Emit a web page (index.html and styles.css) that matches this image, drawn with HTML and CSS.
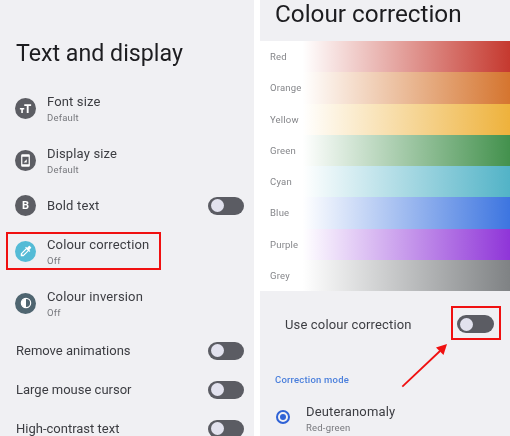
FILE: index.html
```html
<!DOCTYPE html>
<html lang="en">
<head>
    <meta charset="UTF-8">
    <title>Colour correction</title>
    <link rel="stylesheet" href="styles.css">
</head>
<body>
    <!-- Text and display screen -->
    <div class="panel left-panel">
        <h1 class="left-title">Text and display</h1>

        <div class="row row-icon">
            <div class="icon icon-dark">
                <svg viewBox="0 0 24 24" width="15" height="15"><path d="M10 5h11v3h-4v11h-3V8h-4zM3 11h7v2.400H7.800V19H5.200v-5.600H3z" fill="#fff"/></svg>
            </div>
            <div class="row-text">
                <div class="row-title">Font size</div>
                <div class="row-sub">Default</div>
            </div>
        </div>

        <div class="row row-icon">
            <div class="icon icon-dark">
                <svg viewBox="0 0 24 24" width="15" height="15"><path d="M7 2h10a2 2 0 0 1 2 2v16a2 2 0 0 1-2 2H7a2 2 0 0 1-2-2V4a2 2 0 0 1 2-2zm0 4v12h10V6zM9 15l5-5v5z" fill="#fff" fill-rule="evenodd"/></svg>
            </div>
            <div class="row-text">
                <div class="row-title">Display size</div>
                <div class="row-sub">Default</div>
            </div>
        </div>

        <div class="row row-single">
            <div class="icon icon-dark icon-letter">B</div>
            <div class="row-text">
                <div class="row-title">Bold text</div>
            </div>
            <div class="toggle"><div class="knob"></div></div>
        </div>

        <div class="row row-icon row-marked">
            <div class="icon icon-cyan">
                <svg viewBox="0 0 24 24" width="14" height="14"><path d="M20.710 5.630l-2.340-2.340c-.39-.39-1.020-.39-1.410 0l-3.120 3.120-1.930-1.910-1.410 1.410 1.420 1.420L3 16.250V21h4.750l8.920-8.920 1.420 1.420 1.410-1.410-1.920-1.920 3.120-3.120c.4-.4.4-1.030.01-1.420zM6.920 19L5 17.080l8.060-8.060 1.920 1.920L6.920 19z" fill="#fff"/></svg>
            </div>
            <div class="row-text">
                <div class="row-title">Colour correction</div>
                <div class="row-sub">Off</div>
            </div>
            <div class="red-box red-box-row"></div>
        </div>

        <div class="row row-icon">
            <div class="icon icon-slate">
                <svg viewBox="0 0 24 24" width="14" height="14"><circle cx="12" cy="12" r="8" fill="none" stroke="#fff" stroke-width="2"/><path d="M12 4a8 8 0 0 0 0 16z" fill="#fff"/></svg>
            </div>
            <div class="row-text">
                <div class="row-title">Colour inversion</div>
                <div class="row-sub">Off</div>
            </div>
        </div>

        <div class="row row-plain first-plain">
            <div class="row-title">Remove animations</div>
            <div class="toggle"><div class="knob"></div></div>
        </div>
        <div class="row row-plain">
            <div class="row-title">Large mouse cursor</div>
            <div class="toggle"><div class="knob"></div></div>
        </div>
        <div class="row row-plain">
            <div class="row-title">High-contrast text</div>
            <div class="toggle"><div class="knob"></div></div>
        </div>
    </div>

    <!-- Colour correction screen -->
    <div class="panel right-panel">
        <div class="right-header">
            <h1 class="right-title">Colour correction</h1>
        </div>

        <div class="swatches">
            <div class="swatch red">Red</div>
            <div class="swatch orange">Orange</div>
            <div class="swatch yellow">Yellow</div>
            <div class="swatch green">Green</div>
            <div class="swatch cyan">Cyan</div>
            <div class="swatch blue">Blue</div>
            <div class="swatch purple">Purple</div>
            <div class="swatch grey">Grey</div>
        </div>

        <div class="use-row">
            <div class="use-label">Use colour correction</div>
            <div class="toggle toggle-big">
                <div class="knob"></div>
                <div class="red-box red-box-toggle"></div>
            </div>
        </div>

        <div class="mode-label">Correction mode</div>

        <div class="radio-row">
            <div class="radio"><div class="radio-dot"></div></div>
            <div class="row-text">
                <div class="row-title">Deuteranomaly</div>
                <div class="row-sub">Red-green</div>
            </div>
        </div>

        <!-- Red arrow pointing at the toggle -->
        <svg class="arrow" width="60" height="60" viewBox="0 0 60 60">
            <path d="M1.300 45.700L39 10" stroke="#f01010" stroke-width="1.800" fill="none"/>
            <path d="M46 3L35 6.500L42.500 14z" fill="#f01010"/>
        </svg>
    </div>
</body>
</html>
```

FILE: styles.css
```css
html, body {
    margin: 0;
    padding: 0;
}

body {
    width: 510px;
    height: 436px;
    overflow: hidden;
    display: flex;
    gap: 6px;
    background: white;
    font-family: Roboto, "Noto Sans", sans-serif;
    color: #3c3d42;
}

/* The source picture is a soft, upscaled screenshot */
.panel {
    height: 436px;
    overflow: hidden;
    filter: blur(0.35px);
}

/* Left screen */
.left-panel {
    width: 254px;
    flex: none;
    background: #f0f0f3;
}

.left-title {
    margin: 0;
    height: 82px;
    padding: 39px 0 0 16px;
    box-sizing: border-box;
    font-size: 23.2px;
    line-height: 28px;
    font-weight: 400;
    color: #1d1d20;
}

.row {
    display: flex;
    align-items: center;
    position: relative;
}

.row-icon {
    height: 52px;
    padding-left: 15px;
}

.row-single {
    height: 39px;
    padding: 0 10px 0 15px;
}

.row-plain {
    height: 39px;
    padding: 0 10px 0 16px;
    justify-content: space-between;
}

.row-plain .row-title {
    letter-spacing: 0;
}

.first-plain {
    margin-top: 2px;
}

.icon {
    width: 21px;
    height: 21px;
    border-radius: 50%;
    display: flex;
    align-items: center;
    justify-content: center;
    flex: none;
    margin-right: 11px;
}

.icon-dark {
    background: #5c5d63;
}

.icon-cyan {
    background: #54bbd6;
}

.icon-slate {
    background: #4f6570;
}

.icon-letter {
    color: white;
    font-size: 11px;
    font-weight: 700;
}

.row-text {
    flex: 1;
}

.row-icon .row-text, .radio-row .row-text {
    padding-top: 2px;
}

.row-title {
    font-size: 13px;
    line-height: 16px;
    letter-spacing: 0.15px;
    color: #3c3d42;
}

.row-sub {
    font-size: 9.5px;
    line-height: 12px;
    margin-top: 2px;
    letter-spacing: 0.2px;
    color: #77787d;
}

/* Switches */
.toggle {
    width: 36px;
    height: 18px;
    border-radius: 9px;
    background: #5b5c63;
    position: relative;
    flex: none;
    display: flex;
    align-items: center;
    padding-left: 3px;
    box-sizing: border-box;
}

.toggle-big {
    width: 37px;
}

.knob {
    width: 13px;
    height: 13px;
    border-radius: 50%;
    background: #e2e2ee;
}

/* Red annotations */
.red-box {
    position: absolute;
    border: 2px solid #f01010;
    box-sizing: border-box;
}

.red-box-row {
    left: 6px;
    top: 7px;
    width: 155px;
    height: 38px;
}

.red-box-toggle {
    left: -6px;
    top: -9px;
    width: 50px;
    height: 34px;
}

.arrow {
    position: absolute;
    left: 141px;
    top: 341px;
}

/* Right screen */
.right-panel {
    width: 250px;
    flex: none;
    background: #f0f0f3;
    position: relative;
}

.right-header {
    height: 41px;
    padding-left: 15px;
    overflow: hidden;
}

.right-title {
    margin: 0;
    font-size: 24.3px;
    line-height: 28px;
    font-weight: 400;
    color: #1d1d20;
}

.swatch {
    height: 31.25px;
    line-height: 31.25px;
    padding-left: 10px;
    font-size: 9.5px;
    letter-spacing: 0.2px;
    color: #85868a;
}

.red { background: linear-gradient(90deg, #fff 17%, #c5392f); }
.orange { background: linear-gradient(90deg, #fff 17%, #d5752f); }
.yellow { background: linear-gradient(90deg, #fff 17%, #eeb23c); }
.green { background: linear-gradient(90deg, #fff 17%, #43914d); }
.cyan { background: linear-gradient(90deg, #fff 17%, #52b3c7); }
.blue { background: linear-gradient(90deg, #fff 17%, #3d75e0); }
.purple { background: linear-gradient(90deg, #fff 17%, #8f35d8); }
.grey { background: linear-gradient(90deg, #fff 17%, #7f8284); }

.use-row {
    height: 66px;
    display: flex;
    align-items: center;
    justify-content: space-between;
    padding: 0 16px 0 25px;
}

.use-label {
    font-size: 13px;
    letter-spacing: 0.15px;
    color: #3c3d42;
}

.mode-label {
    margin-top: 16px;
    padding-left: 15px;
    font-size: 9.5px;
    line-height: 14px;
    font-weight: 500;
    letter-spacing: 0.2px;
    color: #4a7fdc;
}

.radio-row {
    display: flex;
    align-items: center;
    margin-top: 15px;
    padding-left: 16px;
}

.radio {
    width: 14px;
    height: 14px;
    border: 2px solid #2f62d6;
    border-radius: 50%;
    box-sizing: border-box;
    display: flex;
    align-items: center;
    justify-content: center;
    margin-right: 16px;
    margin-top: -2px;
}

.radio-dot {
    width: 6px;
    height: 6px;
    border-radius: 50%;
    background: #2f62d6;
}
```
